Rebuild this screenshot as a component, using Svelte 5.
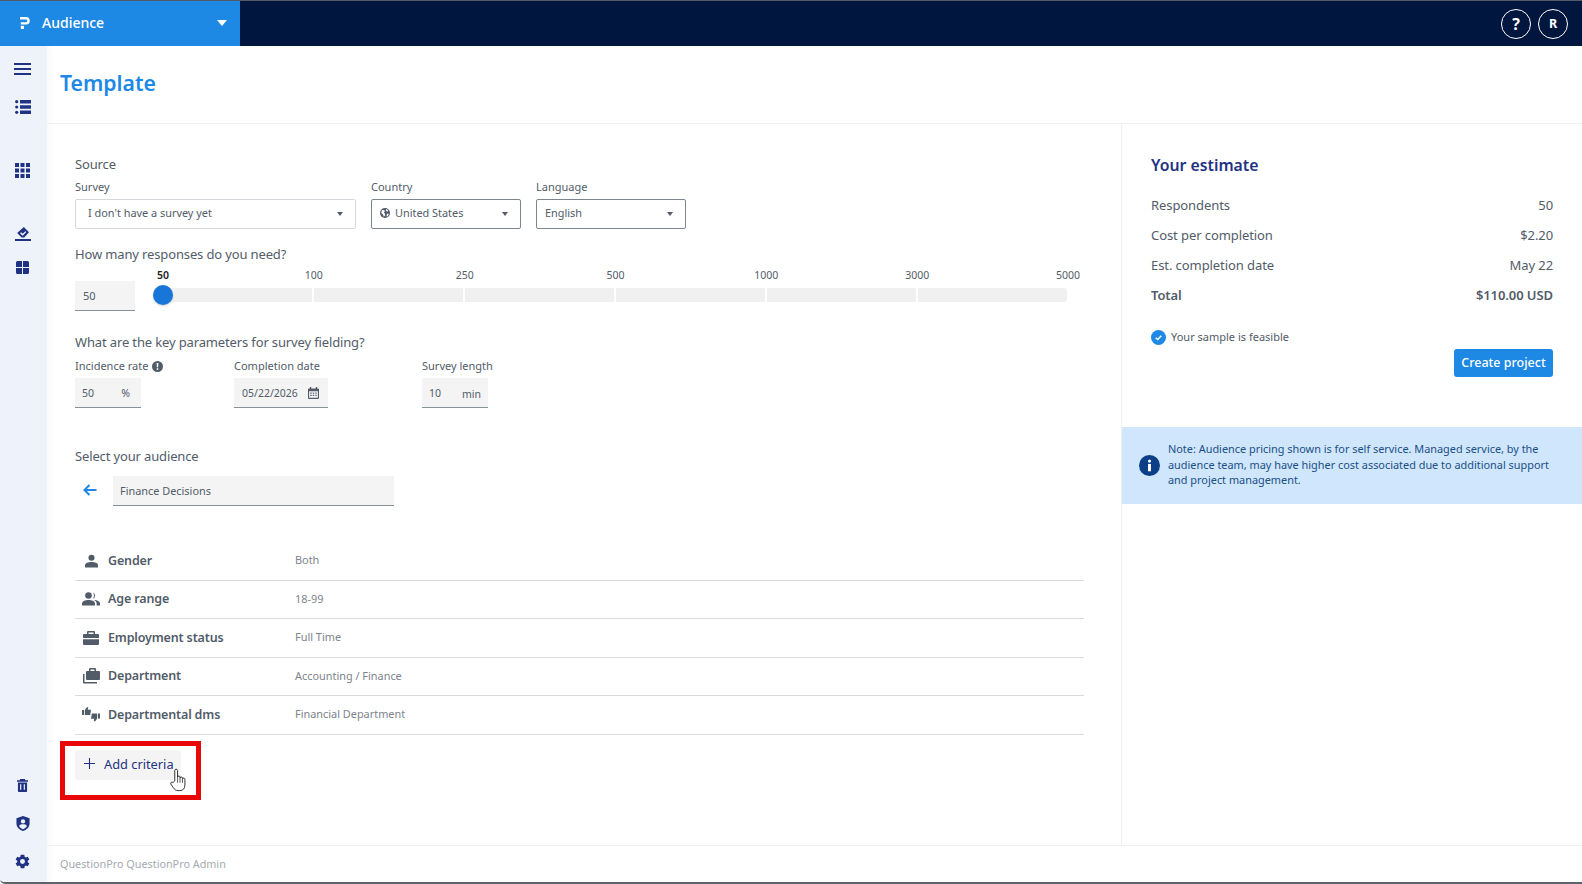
<script>
  const stops = ["50", "100", "250", "500", "1000", "3000", "5000"];

  const criteria = [
    { label: "Gender", value: "Both", icon: "person" },
    { label: "Age range", value: "18-99", icon: "people" },
    { label: "Employment status", value: "Full Time", icon: "case" },
    { label: "Department", value: "Accounting / Finance", icon: "cases" },
    { label: "Departmental dms", value: "Financial Department", icon: "thumbs" }
  ];

  const estimate = [
    { label: "Respondents", value: "50" },
    { label: "Cost per completion", value: "$2.20" },
    { label: "Est. completion date", value: "May 22" },
    { label: "Total", value: "$110.00 USD", total: true }
  ];
</script>

<div class="shell">
  <header class="topbar">
    <div class="product">
      <svg class="logo" viewBox="0 0 10 12" width="10" height="12" aria-hidden="true">
        <path d="M0 0H6a3.8 3.8 0 0 1 0 7.6H.8V5.200H6a1.300 1.300 0 0 0 0-2.600H0z" fill="#fff" />
        <rect x=".8" y="8.800" width="3.200" height="3.200" fill="#fff" />
      </svg>
      <span class="product-name">Audience</span>
      <span class="product-caret"></span>
    </div>
    <div class="top-actions">
      <span class="round">?</span>
      <span class="round small">R</span>
    </div>
  </header>

  <div class="body">
    <nav class="rail">
      <div class="rail-top">
        <svg viewBox="0 0 17 12" width="17" height="12"><path d="M0 1h17M0 6h17M0 11h17" stroke="#1f3283" stroke-width="1.800" /></svg>
        <svg class="nav-list" viewBox="0 0 16 16" width="16" height="16"><path d="M5 1h11v3.400H5zM5 6.300h11v3.400H5zM5 11.600h11V15H5z" fill="#1f3283" /><circle cx="1.700" cy="2.700" r="1.600" fill="#1f3283" /><circle cx="1.700" cy="8" r="1.600" fill="#1f3283" /><circle cx="1.700" cy="13.300" r="1.600" fill="#1f3283" /></svg>
        <svg class="nav-grid" viewBox="0 0 15 15" width="15" height="15"><path d="M0 0h4v4H0zM5.500 0h4v4h-4zM11 0h4v4h-4zM0 5.500h4v4H0zM5.500 5.500h4v4h-4zM11 5.500h4v4h-4zM0 11h4v4H0zM5.500 11h4v4h-4zM11 11h4v4h-4z" fill="#1f3283" /></svg>
        <svg class="nav-vote" viewBox="0 0 16 14" width="16" height="14"><path d="M8.800 0 14 5.200l-4.800 5.200H6.600L2.200 6z" fill="#1f3283" /><path d="m5.600 5.800 2 2 3.200-3.200" stroke="#fff" stroke-width="1.300" fill="none" /><path d="M0 12h16v2H0z" fill="#1f3283" /></svg>
        <svg class="nav-tiles" viewBox="0 0 13 13" width="13" height="13"><path d="M1.500 0H6v6H0V1.500A1.500 1.500 0 0 1 1.500 0zM7 0h4.500A1.500 1.500 0 0 1 13 1.500V6H7zM0 7h6v6H1.500A1.500 1.500 0 0 1 0 11.500zM7 7h6v4.500a1.500 1.500 0 0 1-1.500 1.500H7z" fill="#1f3283" /></svg>
      </div>
      <div class="rail-bottom">
        <svg class="nav-trash" viewBox="0 0 12 14" width="11" height="13"><path d="M3.500 0h5l.6 1.200H12v1.600H0V1.200h2.900zM1 3.600h10V13a1 1 0 0 1-1 1H2a1 1 0 0 1-1-1z" fill="#1f3283" /><path d="M4 5.500v6M8 5.500v6" stroke="#eef3fb" stroke-width="1.300" /></svg>
        <svg viewBox="0 0 14 16" width="14" height="15"><path d="M7 0 14 2.500V8c0 4-3.200 6.800-7 8-3.800-1.200-7-4-7-8V2.500z" fill="#1f3283" /><circle cx="7" cy="5.800" r="2.300" fill="#eef3fb" /><path d="M2.800 10.600C3.800 9 5.400 8.900 7 8.900s3.200.1 4.200 1.700C10.200 12.400 8.600 13.600 7 14.200c-1.600-.6-3.200-1.800-4.200-3.600z" fill="#eef3fb" /></svg>
        <svg viewBox="0 0 24 24" width="17" height="17"><path d="M19.400 13a7.500 7.500 0 0 0 0-2l2.300-1.800-2.300-4-2.700 1.100a7.500 7.500 0 0 0-1.700-1L14.600 2.400H9.400L9 5.300a7.500 7.500 0 0 0-1.700 1L4.600 5.200l-2.300 4L4.600 11a7.500 7.500 0 0 0 0 2l-2.300 1.800 2.300 4 2.700-1.100a7.500 7.500 0 0 0 1.700 1l.4 2.900h5.200l.4-2.900a7.500 7.500 0 0 0 1.700-1l2.700 1.100 2.300-4zM12 15.500a3.500 3.500 0 1 1 0-7 3.500 3.500 0 0 1 0 7z" fill="#1f3283" /></svg>
      </div>
    </nav>

    <div class="page">
      <div class="page-head">
        <h1>Template</h1>
      </div>

      <div class="columns">
        <main class="form">
          <h2 class="section first">Source</h2>
          <div class="selects">
            <div class="field survey">
              <span class="label">Survey</span>
              <div class="select soft"><span>I don't have a survey yet</span><i class="caret"></i></div>
            </div>
            <div class="field country">
              <span class="label">Country</span>
              <div class="select">
                <span class="with-globe">
                  <svg viewBox="0 0 16 16" width="10" height="10"><circle cx="8" cy="8" r="8" fill="#525c69" /><path d="M3 3.500 6.500 3l1.500 2-2 2 2 2v3l-2 2-1-3.500L2 8zM10 1.500l3 2-1 2.500-2.500-1.500zM11 9h3l-1.500 4-2 .5z" fill="#fff" /></svg>
                  United States
                </span>
                <i class="caret"></i>
              </div>
            </div>
            <div class="field language">
              <span class="label">Language</span>
              <div class="select"><span>English</span><i class="caret"></i></div>
            </div>
          </div>

          <h2 class="section responses">How many responses do you need?</h2>
          <div class="slider-row">
            <div class="count">50</div>
            <div class="slider">
              <div class="stops">
                {#each stops as stop, i}
                  <span class:current={i === 0}>{stop}</span>
                {/each}
              </div>
              <div class="track">
                {#each stops.slice(1) as stop}
                  <span class="segment"></span>
                {/each}
                <span class="thumb"></span>
              </div>
            </div>
          </div>

          <h2 class="section params">What are the key parameters for survey fielding?</h2>
          <div class="param-row">
            <div class="field incidence">
              <span class="label">
                Incidence rate
                <svg viewBox="0 0 12 12" width="11" height="11"><circle cx="6" cy="6" r="6" fill="#525c69" /><path d="M5 2.200h2l-.3 4.600H5.300zM5.100 7.800h1.800v1.800H5.100z" fill="#fff" /></svg>
              </span>
              <div class="filled"><span>50</span><span class="unit">%</span></div>
            </div>
            <div class="field completion">
              <span class="label">Completion date</span>
              <div class="filled">
                <span>05/22/2026</span>
                <svg viewBox="0 0 12 13" width="11" height="12"><path d="M2 0h1.500v1.500h5V0H10v1.500h1a1 1 0 0 1 1 1V12a1 1 0 0 1-1 1H1a1 1 0 0 1-1-1V2.500a1 1 0 0 1 1-1h1zM1.200 4.500v7.300h9.600V4.500z" fill="#525c69" /><path d="M2.500 6H4v1.200H2.500zM5.200 6h1.500v1.200H5.200zM8 6h1.500v1.200H8zM2.500 8.500H4v1.200H2.500zM5.200 8.500h1.500v1.200H5.200zM8 8.500h1.500v1.200H8z" fill="#525c69" /></svg>
              </div>
            </div>
            <div class="field length">
              <span class="label">Survey length</span>
              <div class="filled"><span>10</span><span class="unit low">min</span></div>
            </div>
          </div>

          <h2 class="section audience">Select your audience</h2>
          <div class="audience-row">
            <svg viewBox="0 0 14 12" width="14" height="12"><path d="M13.500 6H1.500M6.500 1l-5 5 5 5" stroke="#1e88e5" stroke-width="2" fill="none" /></svg>
            <div class="audience-input">Finance Decisions</div>
          </div>

          <ul class="criteria">
            {#each criteria as row}
              <li>
                <span class="crit-icon">
                  {#if row.icon === "person"}
                    <svg viewBox="0 0 14 14" width="13" height="14"><circle cx="7" cy="3.500" r="3.300" fill="#525c69" /><path d="M0 14v-2.500C0 9 3.500 8 7 8s7 1 7 3.500V14z" fill="#525c69" /></svg>
                  {:else if row.icon === "people"}
                    <svg viewBox="0 0 18 14" width="18" height="14"><circle cx="6.500" cy="3.500" r="3.300" fill="#525c69" /><path d="M0 13.500v-2C0 9 3.500 8 6.500 8s6.500 1 6.500 3.500v2z" fill="#525c69" /><path d="M10.800.4a3.300 3.300 0 0 1 0 6.300 5 5 0 0 0 0-6.300zM12 8c3 .2 6 1.300 6 3.500v2h-3.400v-2c0-1.500-1-2.700-2.600-3.500z" fill="#525c69" /></svg>
                  {:else if row.icon === "case"}
                    <svg viewBox="0 0 16 14" width="16" height="14"><path d="M5 0h6a1 1 0 0 1 1 1v2h3a1 1 0 0 1 1 1v3H0V4a1 1 0 0 1 1-1h3V1a1 1 0 0 1 1-1zm.500 1.500V3h5V1.500zM0 8.200h16V13a1 1 0 0 1-1 1H1a1 1 0 0 1-1-1z" fill="#525c69" /></svg>
                  {:else if row.icon === "cases"}
                    <svg viewBox="0 0 17 16" width="17" height="16"><path d="M7 0h5a1 1 0 0 1 1 1v2h3a1 1 0 0 1 1 1v7a1 1 0 0 1-1 1H4a1 1 0 0 1-1-1V4a1 1 0 0 1 1-1h2V1a1 1 0 0 1 1-1zm.500 1.500V3h4V1.500z" fill="#525c69" /><path d="M0 6h1.500v8H14v1.500H1a1 1 0 0 1-1-1z" fill="#525c69" /></svg>
                  {:else}
                    <svg viewBox="0 0 18 15" width="18" height="15"><path d="M0 3h2v5H0zM2.800 3 5 0l1.200.5-.4 2.300H9L8.200 8H2.800z" fill="#525c69" /><path d="M16 6.500h2v5h-2zM15.200 11.500 13 14.500l-1.200-.5.4-2.300H9l.8-5.200h5.400z" fill="#525c69" /></svg>
                  {/if}
                </span>
                <span class="crit-label">{row.label}</span>
                <span class="crit-value">{row.value}</span>
              </li>
            {/each}
          </ul>

          <div class="highlight">
            <button class="add" type="button">
              <svg viewBox="0 0 12 12" width="11" height="11"><path d="M6 0v12M0 6h12" stroke="#1f3283" stroke-width="1.200" /></svg>
              Add criteria
            </button>
            <svg class="pointer" viewBox="0 0 18 26" width="18" height="24">
              <path d="M5.500 14V2.800c0-2 3-2 3 0V10c0-1.700 2.700-1.700 2.700 0v1c0-1.700 2.700-1.700 2.700 0v1c0-1.500 2.600-1.500 2.600.2v6.300c0 3.500-2 6-5.500 6H9c-2.500 0-3.800-1.300-5-3.200L1.300 17.500c-.9-1.600 1-3 2.400-1.800z" fill="#fff" stroke="#222" stroke-width="1" stroke-linejoin="round" />
              <path d="M8.500 10v6M11.200 11v5M13.900 12v4" stroke="#222" stroke-width=".8" />
            </svg>
          </div>
        </main>

        <aside class="side">
          <div class="estimate">
            <h2>Your estimate</h2>
            <dl>
              {#each estimate as row}
                <div class="est-row" class:total={row.total}>
                  <dt>{row.label}</dt>
                  <dd>{row.value}</dd>
                </div>
              {/each}
            </dl>
            <div class="feasible">
              <svg viewBox="0 0 16 16" width="15" height="15"><circle cx="8" cy="8" r="8" fill="#1e88e5" /><path d="m5 8.200 2.100 2 3.900-4" stroke="#fff" stroke-width="1.600" fill="none" /></svg>
              Your sample is feasible
            </div>
            <div class="actions"><button class="create" type="button">Create project</button></div>
          </div>
          <div class="note">
            <svg viewBox="0 0 20 20" width="21" height="21"><circle cx="10" cy="10" r="10" fill="#0b3f88" /><circle cx="10" cy="5.800" r="1.500" fill="#fff" /><path d="M8.600 8.500h2.800v7H8.600z" fill="#fff" /></svg>
            <p>Note: Audience pricing shown is for self service. Managed service, by the audience team, may have higher cost associated due to additional support and project management.</p>
          </div>
        </aside>
      </div>

      <footer class="foot">QuestionPro QuestionPro Admin</footer>
    </div>
  </div>
</div>

<style>
  :global(body) {
    margin: 0;
    background: #fff;
  }

  .shell {
    height: 884px;
    display: flex;
    flex-direction: column;
    overflow: hidden;
    font-family: "Noto Sans", "Open Sans", sans-serif;
    color: #525c69;
    border-top: 1px solid #555b66;
    border-bottom: 2px solid #5f6368;
    border-bottom-left-radius: 5px;
    box-sizing: border-box;
  }

  .topbar {
    flex: 0 0 45px;
    display: flex;
    justify-content: space-between;
    align-items: center;
    background: #00163f;
  }

  .product {
    width: 240px;
    height: 100%;
    box-sizing: border-box;
    padding: 0 13px 2px 20px;
    display: flex;
    align-items: center;
    background: #1e88e5;
    color: #fff;
  }

  .product-name {
    margin-left: 12px;
    font-size: 14px;
    font-weight: 500;
  }

  .product-caret {
    margin-left: auto;
    border-left: 5.5px solid transparent;
    border-right: 5.5px solid transparent;
    border-top: 6px solid #fff;
  }

  .top-actions {
    display: flex;
    gap: 7px;
    padding-right: 14px;
  }

  .round {
    width: 28px;
    height: 28px;
    border: 1px solid #fff;
    border-radius: 50%;
    display: grid;
    place-items: center;
    color: #fff;
    font-size: 16px;
    font-weight: 700;
  }

  .round.small {
    font-size: 12.5px;
  }

  .body {
    flex: 1;
    display: flex;
    min-height: 0;
  }

  .rail {
    flex: 0 0 47px;
    background: #eef3fb;
    display: flex;
    flex-direction: column;
    justify-content: space-between;
    align-items: center;
    padding: 17px 2px 12px 0;
    box-sizing: border-box;
    box-shadow: 2px 0 6px rgba(30, 50, 100, 0.04);
  }

  .rail-top,
  .rail-bottom {
    display: flex;
    flex-direction: column;
    align-items: center;
  }

  .rail-bottom {
    gap: 22px;
  }

  .nav-trash {
    margin-bottom: 2px;
  }

  .nav-list {
    margin-top: 24px;
  }

  .nav-grid {
    margin-top: 48px;
  }

  .nav-vote {
    margin-top: 49px;
  }

  .nav-tiles {
    margin-top: 20px;
  }

  .page {
    flex: 1;
    min-width: 0;
    display: flex;
    flex-direction: column;
  }

  .page-head {
    flex: 0 0 78px;
    box-sizing: border-box;
    padding: 21px 0 0 13px;
    border-bottom: 1px solid #eef0f5;
  }

  h1 {
    margin: 0;
    color: #1e88e5;
    font-size: 21.2px;
    line-height: 32px;
    font-weight: 600;
  }

  .columns {
    flex: 1;
    min-height: 0;
    display: flex;
  }

  .form {
    box-sizing: border-box;
    padding: 0 37px 0 28px;
    border-right: 1px solid #eef0f5;
    flex: 0 0 1075px;
  }

  .section {
    margin: 0;
    padding-bottom: 1px;
    font-size: 13px;
    line-height: 18px;
    font-weight: 400;
    letter-spacing: -0.14px;
  }

  .section.first {
    margin-top: 31px;
  }

  .section.responses {
    margin-top: 16px;
  }

  .section.params {
    margin-top: 22px;
  }

  .section.audience {
    margin-top: 39px;
  }

  .selects {
    display: flex;
    margin-top: 6px;
  }

  .field {
    display: flex;
    flex-direction: column;
  }

  .label {
    font-size: 11px;
    line-height: 14px;
    display: flex;
    align-items: center;
    gap: 4px;
    margin-bottom: 5px;
  }

  .survey {
    width: 281px;
    margin-right: 15px;
  }

  .country {
    width: 150px;
    margin-right: 15px;
  }

  .language {
    width: 150px;
  }

  .select {
    height: 30px;
    box-sizing: border-box;
    border: 1px solid #7c8590;
    border-radius: 2px;
    padding: 0 12px 0 8px;
    display: flex;
    align-items: center;
    justify-content: space-between;
    font-size: 10.9px;
  }

  .select > span {
    margin-top: -3px;
  }

  .select.soft {
    border-color: #d5d8dc;
    padding-left: 12px;
  }

  .with-globe {
    display: flex;
    align-items: center;
    gap: 5px;
  }

  .caret {
    border-left: 3.5px solid transparent;
    border-right: 3.5px solid transparent;
    border-top: 4px solid #525c69;
  }

  .slider-row {
    display: flex;
    margin-top: 4px;
  }

  .count {
    width: 60px;
    height: 30px;
    margin-top: 13px;
    box-sizing: border-box;
    padding: 0 8px;
    display: flex;
    align-items: center;
    background: #f4f4f4;
    border-bottom: 1px solid #8a9099;
    font-size: 11px;
  }

  .slider {
    margin-left: 28px;
    width: 904px;
    flex: none;
  }

  .stops {
    display: flex;
    justify-content: space-between;
    font-size: 10.5px;
    line-height: 14px;
    margin: 0 -21px 6px -20px;
  }

  .stops span {
    width: 40px;
    text-align: center;
  }

  .stops .current {
    color: #222;
    font-weight: 600;
  }

  .track {
    position: relative;
    display: flex;
    gap: 2px;
    height: 14px;
  }

  .segment {
    flex: 1;
    background: #f0f0f0;
  }

  .segment:nth-last-child(2) {
    border-radius: 0 3px 3px 0;
  }

  .thumb {
    position: absolute;
    left: -10px;
    top: -3px;
    width: 20px;
    height: 20px;
    border-radius: 50%;
    background: #1976d9;
    box-shadow: 0 1px 2px rgba(0, 0, 0, 0.2);
  }

  .param-row {
    display: flex;
    margin-top: 7px;
  }

  .filled {
    height: 30px;
    box-sizing: border-box;
    background: #f4f4f4;
    border-bottom: 1px solid #8a9099;
    display: flex;
    align-items: center;
    justify-content: space-between;
    padding: 0 7px;
    font-size: 10.5px;
  }

  .incidence {
    width: 159px;
  }

  .incidence .filled {
    width: 66px;
    padding-right: 11px;
  }

  .completion {
    width: 188px;
  }

  .completion .filled {
    width: 94px;
    padding: 0 9px 0 8px;
  }

  .length .filled {
    width: 66px;
  }

  .unit.low {
    padding-top: 2px;
  }

  .audience-row {
    display: flex;
    align-items: center;
    margin-top: 10px;
  }

  .audience-row svg {
    margin: -3px 0 0 8px;
  }

  .audience-input {
    margin-left: 16px;
    width: 281px;
    height: 30px;
    box-sizing: border-box;
    padding: 7px 7px 0;
    background: #f4f4f4;
    border-bottom: 1px solid #8a9099;
    font-size: 10.9px;
    line-height: 16px;
  }

  .criteria {
    list-style: none;
    margin: 36px 0 0;
    padding: 0;
  }

  .criteria li {
    height: 38.5px;
    box-sizing: border-box;
    display: flex;
    align-items: center;
    border-bottom: 1px solid #d9dbde;
  }

  .crit-icon {
    width: 33px;
    display: flex;
    justify-content: center;
    padding-right: 1px;
    box-sizing: border-box;
  }

  .crit-label {
    width: 187px;
    font-size: 12.5px;
    letter-spacing: -0.15px;
    font-weight: 600;
    padding-bottom: 1px;
  }

  .crit-value {
    font-size: 10.9px;
    color: #7d848d;
    padding-bottom: 2px;
  }

  .highlight {
    position: relative;
    width: 141px;
    height: 59px;
    margin: 6px 0 0 -15px;
    box-sizing: border-box;
    border: 5px solid #e80808;
    padding: 4px 0 0 10px;
  }

  .add {
    width: 106px;
    height: 30px;
    padding: 0 0 2px 9px;
    border: 0;
    border-radius: 3px;
    background: #f4f4f4;
    display: flex;
    align-items: center;
    gap: 9px;
    color: #1f3283;
    font: 400 12.8px "Noto Sans", "Open Sans", sans-serif;
    white-space: nowrap;
  }

  .pointer {
    position: absolute;
    left: 104px;
    top: 22px;
  }

  .side {
    flex: 1;
    min-width: 0;
  }

  .estimate {
    padding: 29px 29px 0;
    height: 303px;
    box-sizing: border-box;
  }

  .estimate h2 {
    margin: 0;
    color: #1f3283;
    font-size: 15.8px;
    line-height: 24px;
    font-weight: 600;
  }

  dl {
    margin: 13px 0 0;
  }

  .est-row {
    display: flex;
    justify-content: space-between;
    height: 30px;
    align-items: center;
    font-size: 13px;
    letter-spacing: -0.08px;
  }

  .est-row dd {
    margin: 0;
  }

  .est-row.total {
    font-weight: 600;
  }

  .feasible {
    margin-top: 19px;
    display: flex;
    align-items: center;
    gap: 5px;
    font-size: 11px;
    line-height: 16px;
  }

  .actions {
    display: flex;
    justify-content: flex-end;
    margin-top: 4px;
  }

  .create {
    width: 99px;
    height: 28px;
    padding: 0 0 2px;
    border: 0;
    border-radius: 3px;
    background: #1e88e5;
    color: #fff;
    font: 500 12.5px "Noto Sans", "Open Sans", sans-serif;
  }

  .note {
    height: 77px;
    box-sizing: border-box;
    background: #cfe6fc;
    display: flex;
    align-items: center;
    gap: 8px;
    padding: 0 20px 0 17px;
  }

  .note svg {
    flex: none;
  }

  .note p {
    margin: 0;
    padding-bottom: 2px;
    color: #1b4f86;
    font-size: 10.9px;
    line-height: 15.5px;
  }

  .foot {
    flex: 0 0 37px;
    box-sizing: border-box;
    border-top: 1px solid #eef0f5;
    padding: 10px 0 0 13px;
    font-size: 10.8px;
    line-height: 16px;
    color: #a5a9af;
  }
</style>
